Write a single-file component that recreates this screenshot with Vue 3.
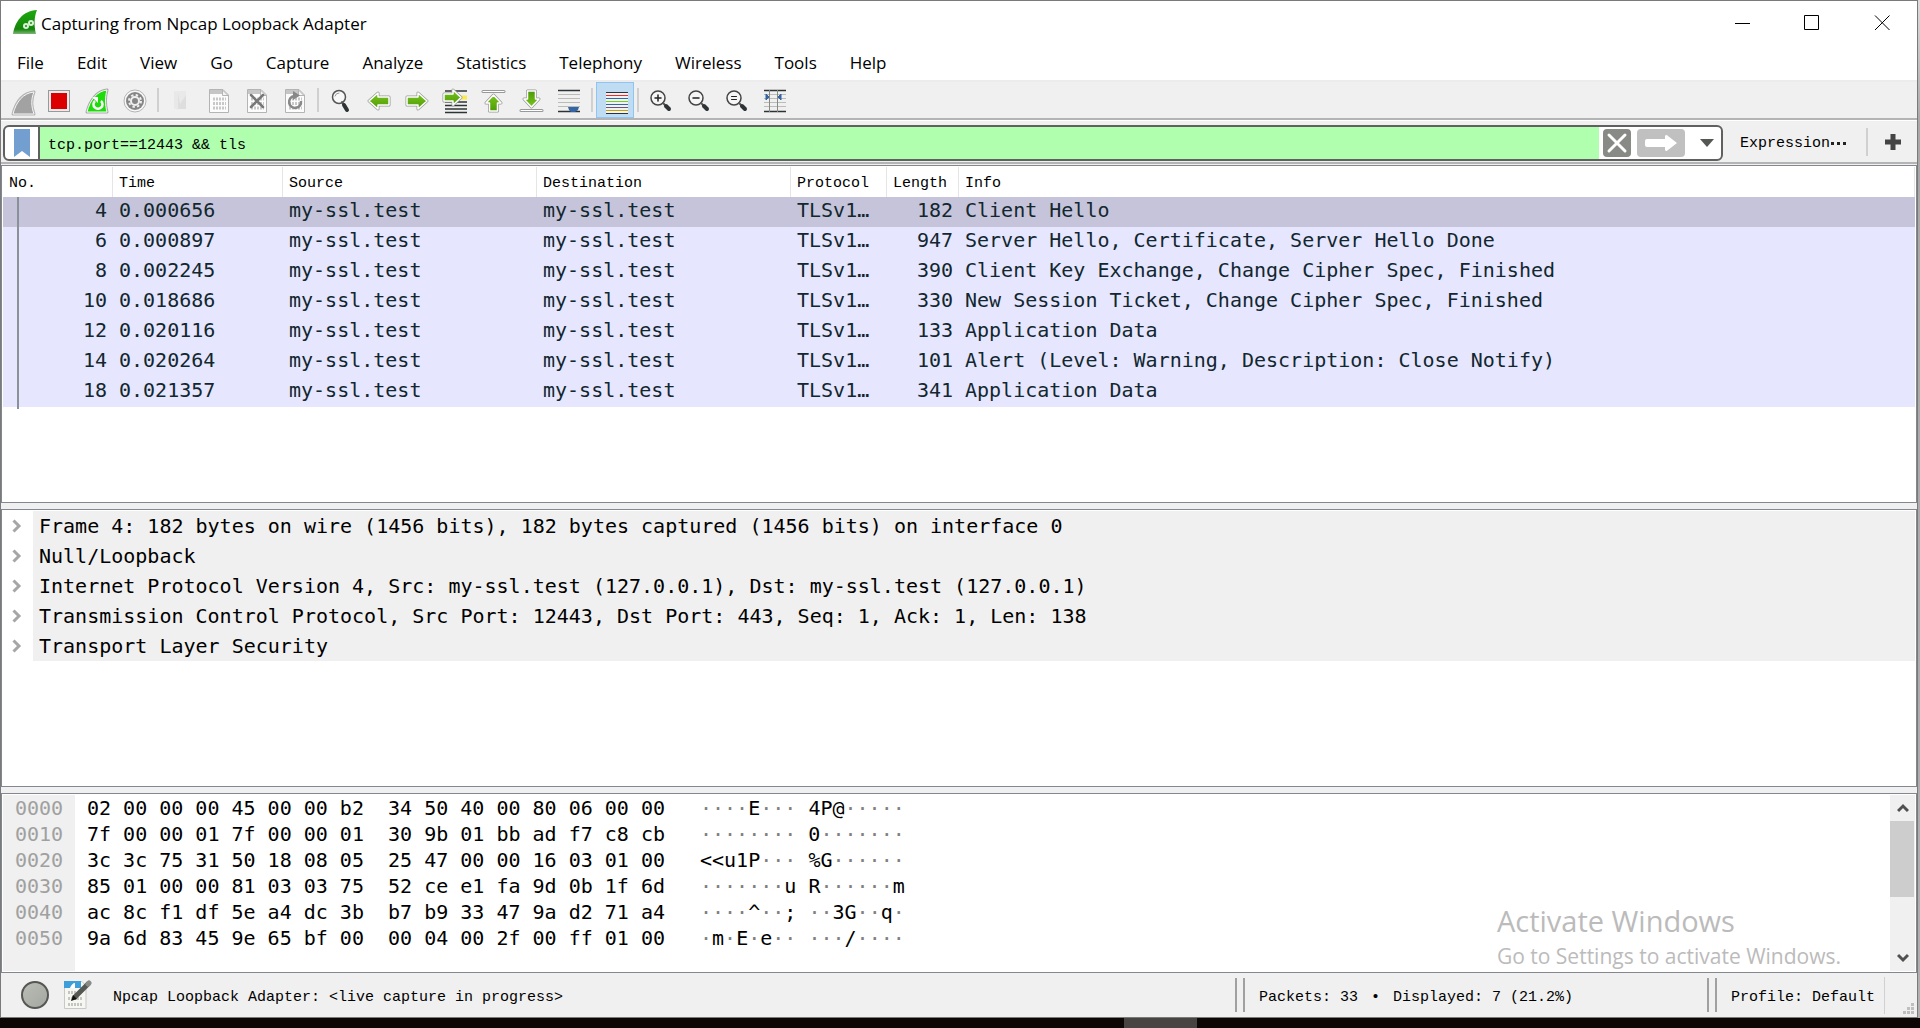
<script setup>
import { ref } from 'vue'

const menus = ['File', 'Edit', 'View', 'Go', 'Capture', 'Analyze', 'Statistics', 'Telephony', 'Wireless', 'Tools', 'Help']

const filter = ref('tcp.port==12443 && tls')

const columns = [
  { key: 'no', label: 'No.' },
  { key: 'time', label: 'Time' },
  { key: 'source', label: 'Source' },
  { key: 'destination', label: 'Destination' },
  { key: 'protocol', label: 'Protocol' },
  { key: 'length', label: 'Length' },
  { key: 'info', label: 'Info' },
]

const host = 'my-ssl.test'
const packets = [
  [4, '0.000656', 182, 'Client Hello'],
  [6, '0.000897', 947, 'Server Hello, Certificate, Server Hello Done'],
  [8, '0.002245', 390, 'Client Key Exchange, Change Cipher Spec, Finished'],
  [10, '0.018686', 330, 'New Session Ticket, Change Cipher Spec, Finished'],
  [12, '0.020116', 133, 'Application Data'],
  [14, '0.020264', 101, 'Alert (Level: Warning, Description: Close Notify)'],
  [18, '0.021357', 341, 'Application Data'],
].map(([no, time, length, info]) => ({ no, time, source: host, destination: host, protocol: 'TLSv1…', length, info }))

const selected = ref(4)

const layers = [
  'Frame 4: 182 bytes on wire (1456 bits), 182 bytes captured (1456 bits) on interface 0',
  'Null/Loopback',
  'Internet Protocol Version 4, Src: my-ssl.test (127.0.0.1), Dst: my-ssl.test (127.0.0.1)',
  'Transmission Control Protocol, Src Port: 12443, Dst Port: 443, Seq: 1, Ack: 1, Len: 138',
  'Transport Layer Security',
]

const dump = [
  ['0000', '02 00 00 00 45 00 00 b2  34 50 40 00 80 06 00 00', '····E··· 4P@·····'],
  ['0010', '7f 00 00 01 7f 00 00 01  30 9b 01 bb ad f7 c8 cb', '········ 0·······'],
  ['0020', '3c 3c 75 31 50 18 08 05  25 47 00 00 16 03 01 00', '<<u1P··· %G······'],
  ['0030', '85 01 00 00 81 03 03 75  52 ce e1 fa 9d 0b 1f 6d', '·······u R······m'],
  ['0040', 'ac 8c f1 df 5e a4 dc 3b  b7 b9 33 47 9a d2 71 a4', '····^··; ··3G··q·'],
  ['0050', '9a 6d 83 45 9e 65 bf 00  00 04 00 2f 00 ff 01 00', '·m·E·e·· ···/····'],
].map(([offset, hex, ascii]) => ({ offset, hex, runs: ascii.match(/·+|[^·]+/g) }))

const fin = 'M11 32C14 20 21 11 32 10C29 17 29 24 32 32Z'
const finSmall = 'M9 30C12 18 19 9 29 8C27 15 27 23 29 30Z'
const page = 'M9.500 7.500H23L28.500 13V30.500H9.500Z'
const left = 'M9 19L18 11V15H29V23H18V27Z'
const right = 'M29 19L20 11V15H9V23H20V27Z'

const tools = [
  { id: 'start', label: 'Start capturing packets' },
  { id: 'stop', label: 'Stop capturing packets' },
  { id: 'restart', label: 'Restart current capture' },
  { id: 'options', label: 'Capture options' },
  null,
  { id: 'open', label: 'Open a capture file' },
  { id: 'save', label: 'Save this capture file' },
  { id: 'close', label: 'Close this capture file' },
  { id: 'reload', label: 'Reload this file' },
  null,
  { id: 'find', label: 'Find a packet' },
  { id: 'prev', label: 'Go back' },
  { id: 'next', label: 'Go forward' },
  { id: 'goto', label: 'Go to specified packet' },
  { id: 'first', label: 'Go to first packet' },
  { id: 'last', label: 'Go to last packet' },
  { id: 'autoscroll', label: 'Auto scroll in live capture' },
  null,
  { id: 'colorize', label: 'Colorize packet list', active: true },
  null,
  { id: 'zoomin', label: 'Enlarge text' },
  { id: 'zoomout', label: 'Shrink text' },
  { id: 'zoomreset', label: 'Reset text size' },
  { id: 'resize', label: 'Resize columns' },
]
const stripes = ['#2e3436', '#ef2929', '#3465a4', '#73d216', '#3465a4', '#75507b', '#c4a000', '#2e3436']
</script>

<template>
  <div class="desktop">
    <main class="window">
      <header class="titlebar">
        <svg class="app-icon" width="26" height="26" viewBox="0 0 26 26">
          <defs>
            <linearGradient id="finFill" x1="0" y1="0" x2="0" y2="1">
              <stop offset="0" stop-color="#1ea80f" />
              <stop offset="0.8" stop-color="#14860b" />
              <stop offset="1" stop-color="#7fb57a" />
            </linearGradient>
          </defs>
          <path d="M2 25C4 13 11 2 26 1C23 8 23 17 25 25Z" fill="url(#finFill)" />
          <g fill="none" stroke="#d9f0d6" stroke-width="2">
            <circle cx="15" cy="17" r="2" /><circle cx="20" cy="14" r="2" />
          </g>
        </svg>
        <h1>Capturing from Npcap Loopback Adapter</h1>
        <div class="controls">
          <button aria-label="Minimize"><svg width="16" height="16"><path d="M1 8.500H16" /></svg></button>
          <button aria-label="Maximize"><svg width="16" height="16"><path d="M.5 .5H14.500V14.500H.5Z" /></svg></button>
          <button aria-label="Close"><svg width="16" height="16"><path d="M1 .5L15.500 15M15.500 .5L1 15" /></svg></button>
        </div>
      </header>

      <nav class="menubar">
        <button v-for="m in menus" :key="m">{{ m }}</button>
      </nav>

      <div class="toolbar" role="toolbar">
        <template v-for="(t, i) in tools" :key="i">
          <span v-if="!t" class="tool-sep"></span>
          <button v-else :aria-label="t.label" :class="{ active: t.active }">
            <svg width="38" height="36" viewBox="0 0 38 36">
              <defs v-if="t.id === 'start'">
                <linearGradient id="arrowFill" x1="0" y1="0" x2="0" y2="1">
                  <stop offset="0" stop-color="#7ac51f" /><stop offset="1" stop-color="#4e9a06" />
                </linearGradient>
              </defs>
              <g v-if="t.id === 'start'" stroke-linejoin="round">
                <path :d="fin" fill="#fff" stroke="#b4b4b4" stroke-width="3" />
                <path :d="fin" fill="#a2a2a2" stroke="#f6f6f6" stroke-width="1" />
              </g>
              <g v-else-if="t.id === 'stop'">
                <rect x="8.500" y="8.500" width="21" height="21" fill="#e8ecec" stroke="#999" />
                <rect x="11" y="11" width="16" height="16" fill="#d00" />
              </g>
              <g v-else-if="t.id === 'restart'" stroke-linejoin="round">
                <path :d="finSmall" fill="#fff" stroke="#aaa" stroke-width="3" />
                <path :d="finSmall" fill="#1edc0c" stroke="#f4fff2" stroke-width="1" />
                <path d="M17 19A4.500 4.500 0 1 0 23 19" fill="none" stroke="#fff" stroke-width="2.500" />
                <path d="M14 15H20V21Z" fill="#fff" />
              </g>
              <g v-else-if="t.id === 'options'" fill="none">
                <circle cx="19" cy="19" r="11" fill="#f8f8f8" stroke="#b4b4b4" />
                <circle cx="19" cy="19" r="9" fill="#868686" />
                <circle cx="19" cy="19" r="4" fill="#868686" stroke="#f0f0f0" stroke-width="2" />
                <circle cx="19" cy="19" r="6" stroke="#f0f0f0" stroke-width="2" stroke-dasharray="2.400 2.310" />
              </g>
              <g v-else-if="t.id === 'open'">
                <path d="M12 9L16 11V28L12 26Z" fill="#e8e8e8" />
                <path d="M16 11H24V27H16Z" fill="#dedede" /><path d="M12 9H24V13L18 22L16 11Z" fill="#e9e9e9" />
              </g>
              <g v-else-if="['save', 'close', 'reload'].includes(t.id)">
                <path :d="page" fill="#fcfcfc" stroke="#b4b4b4" />
                <path d="M10 8H23V12H10Z" fill="#c6c6c6" /><path d="M22.500 8V13.500H28Z" fill="#f4f4f4" stroke="#b4b4b4" />
                <path d="M13 17H26M13 21.500H26M13 26H26" stroke="#c8c8c8" stroke-width="3" stroke-dasharray="2 1" />
                <path v-if="t.id === 'close'" d="M13 13L25 25M25 13L13 25" stroke="#777" stroke-width="2.500" stroke-linecap="round" />
                <g v-if="t.id === 'reload'">
                  <path d="M18 14A6 6 0 1 0 25 19" fill="none" stroke="#888" stroke-width="2.500" />
                  <path d="M17 9L24 13.500L17 18Z" fill="#888" />
                </g>
              </g>
              <g v-else-if="t.id === 'find'" fill="none" stroke-linecap="round">
                <circle cx="17" cy="15" r="6.500" fill="#f8f8f8" stroke="#555" stroke-width="1.500" />
                <path d="M13 14A4 4 0 0 1 17 11" stroke="#999" />
                <path d="M20 20L22 23" stroke="#555" stroke-width="2" /><path d="M22 23L25 28" stroke="#2e3436" stroke-width="4" />
              </g>
              <g v-else-if="t.id === 'prev' || t.id === 'next'" stroke-linejoin="round">
                <path :d="t.id === 'prev' ? left : right" fill="#fff" stroke="#999" stroke-width="3" />
                <path :d="t.id === 'prev' ? left : right" fill="url(#arrowFill)" stroke="#fff" stroke-width="1.500" />
              </g>
              <g v-else-if="t.id === 'goto'" stroke-linejoin="round">
                <path d="M9 9H31M9 20H31M9 23.500H31M9 27H31M9 30.500H31" stroke="#2e3436" stroke-width="1.500" />
                <path d="M24 15.500H31" stroke="#fce94f" stroke-width="4" />
                <path d="M25 15.500L17 8V12H8V19H17V23Z" fill="#fff" stroke="#999" stroke-width="3" />
                <path d="M25 15.500L17 8V12H8V19H17V23Z" fill="url(#arrowFill)" stroke="#fff" stroke-width="1.500" />
              </g>
              <g v-else-if="t.id === 'first' || t.id === 'last'" stroke-linejoin="round" stroke-linecap="round"
                :transform="t.id === 'last' ? 'matrix(1 0 0 -1 0 38)' : undefined">
                <path d="M9 9.500H30" stroke="#999" stroke-width="3" /><path d="M9 9.500H30" stroke="#fff" />
                <path d="M19.500 13L27 21H23.500V29H15.500V21H12Z" fill="#fff" stroke="#999" stroke-width="3" />
                <path d="M19.500 13L27 21H23.500V29H15.500V21H12Z" fill="url(#arrowFill)" stroke="#fff" stroke-width="1.500" />
              </g>
              <g v-else-if="t.id === 'autoscroll'">
                <path d="M8 12.500H30M8 16.500H30M8 20.500H30M8 24.500H30" stroke="#babdb6" />
                <path d="M8 8.500H30M8 29.500H30" stroke="#2e3436" stroke-width="1.500" />
                <path d="M18 25H29L28 28L25 30H21L19 28Z" fill="#3465a4" />
              </g>
              <g v-else-if="t.id === 'colorize'">
                <rect x="10" y="10" width="22" height="22" fill="#eef2f2" />
                <path v-for="(c, n) in stripes" :key="n" :d="`M10 ${10.5 + n * 3}H32`" :stroke="c" />
              </g>
              <g v-else-if="t.id.startsWith('zoom')" fill="none" stroke-linecap="round">
                <circle cx="16" cy="16" r="7" fill="#f6f6f6" stroke="#444" stroke-width="1.500" />
                <path v-if="t.id === 'zoomin'" d="M13 16H19M16 13V19" stroke="#222" stroke-width="1.500" />
                <path v-if="t.id === 'zoomout'" d="M13 16H19" stroke="#222" stroke-width="1.500" />
                <path v-if="t.id === 'zoomreset'" d="M13.500 14.500H18.500M13.500 17.500H18.500" stroke="#222" />
                <path d="M21 21L23 23" stroke="#555" stroke-width="2" /><path d="M24 24L27 27" stroke="#2e3436" stroke-width="4" />
              </g>
              <g v-else>
                <path d="M8 12.500H30M8 16.500H30M8 20.500H30M8 24.500H30" stroke="#babdb6" />
                <path d="M8 8.500H30M8 29.500H30" stroke="#2e3436" stroke-width="1.500" />
                <path d="M13.500 8V30M21.500 8V30" stroke="#888a85" />
                <path d="M10 12L13 15L10 18ZM25 12L22 15L25 18Z" fill="#3465a4" stroke="#3465a4" />
              </g>
            </svg>
          </button>
        </template>
      </div>

      <form class="filterbar" @submit.prevent>
        <div class="filter-box">
          <button type="button" class="bookmark" aria-label="Manage saved bookmarks">
            <svg width="16" height="28"><path d="M0 0H16V28L8 22L0 28Z" fill="#729fcf" /></svg>
          </button>
          <input v-model="filter" type="text" aria-label="Display filter" spellcheck="false" />
          <button type="button" class="clear" aria-label="Clear filter">
            <svg width="28" height="28"><path d="M6 6L22 22M22 6L6 22" stroke="#fff" stroke-width="3" stroke-linecap="round" /></svg>
          </button>
          <button type="submit" class="apply" aria-label="Apply filter">
            <svg width="48" height="28"><path d="M10 10H28V7Q29 5 31 7L40 14L31 21Q29 23 28 21V18H10Q8 18 8 16V12Q8 10 10 10Z" fill="#fff" /></svg>
          </button>
          <button type="button" class="history" aria-label="Recent filters">
            <svg width="14" height="8"><path d="M0 0H14L7 8Z" fill="#555753" /></svg>
          </button>
        </div>
        <button type="button" class="expression">Expression<svg width="18" height="4"><path d="M1 0H4V3H1ZM7 0H10V3H7ZM13 0H16V3H13Z" fill="#222" /></svg></button>
        <span class="filter-sep"></span>
        <button type="button" class="add" aria-label="Add a display filter button">
          <svg width="16" height="16"><path d="M8 0V16M0 8H16" stroke="#444" stroke-width="5" /></svg>
        </button>
      </form>

      <section class="pane list">
        <table>
          <colgroup><col v-for="c in columns" :key="c.key" :class="'col-' + c.key" /></colgroup>
          <thead>
            <tr><th v-for="c in columns" :key="c.key" scope="col">{{ c.label }}</th></tr>
          </thead>
          <tbody>
            <tr v-for="p in packets" :key="p.no" :class="{ selected: p.no === selected }" @click="selected = p.no">
              <td v-for="c in columns" :key="c.key" :class="c.key">{{ p[c.key] }}</td>
            </tr>
          </tbody>
        </table>
      </section>

      <section class="pane details">
        <ul>
          <li v-for="l in layers" :key="l">
            <button class="expander" :aria-label="'Expand ' + l">
              <svg width="10" height="14"><path d="M1.500 1.500L7 7L1.500 12.500" fill="none" stroke="#a6a6a6" stroke-width="3" /></svg>
            </button>
            <span class="layer">{{ l }}</span>
          </li>
        </ul>
      </section>

      <section class="pane bytes">
        <div class="offsets"><div v-for="r in dump" :key="r.offset">{{ r.offset }}</div></div>
        <div class="hex"><div v-for="r in dump" :key="r.offset">{{ r.hex }}</div></div>
        <div class="ascii">
          <div v-for="r in dump" :key="r.offset"><span v-for="(s, i) in r.runs" :key="i" :class="{ dot: s[0] === '·' }">{{ s }}</span></div>
        </div>
        <div class="scrollbar">
          <button aria-label="Scroll up"><svg width="12" height="10"><path d="M1 8L6 3L11 8" /></svg></button>
          <div class="track"><div class="thumb"></div></div>
          <button aria-label="Scroll down"><svg width="12" height="10"><path d="M1 2L6 7L11 2" /></svg></button>
        </div>
        <div class="watermark">
          <p class="big">Activate Windows</p>
          <p class="small">Go to Settings to activate Windows.</p>
        </div>
      </section>

      <footer class="statusbar">
        <button class="expert" aria-label="Expert information"></button>
        <button class="comment" aria-label="Capture file comment">
          <svg width="28" height="30" viewBox="0 0 28 30">
            <path d="M.5 1.500H18L22 6V28.500H.5Z" fill="#f6f6f2" stroke="#c8c8c4" />
            <path d="M0 1H17V8H0Z" fill="#3d9fd9" /><path d="M6 8C7 5 9 3 11 3V8H6Z" fill="#fff" />
            <path d="M4 12.500H13M4 18.500H19M4 24.500H19" stroke="#c4c4c0" stroke-width="3" stroke-dasharray="2 1" />
            <path d="M10 18L25 3" stroke="#555753" stroke-width="5" /><path d="M24 4L25 3" stroke="#888a85" stroke-width="5" stroke-linecap="round" />
            <path d="M7 21L9 15L13 19Z" fill="#111" />
          </svg>
        </button>
        <span class="message">Npcap Loopback Adapter: &lt;live capture in progress&gt;</span>
        <span class="grip"></span>
        <span class="counts">Packets: 33 <span class="bullet">•</span> Displayed: 7 (21.2%)</span>
        <span class="grip"></span>
        <button class="profile">Profile: Default</button>
        <span class="corner">
          <svg width="12" height="12"><path d="M8 0H11V3H8ZM4 4H7V7H4ZM8 4H11V7H8ZM0 8H3V11H0ZM4 8H7V11H4ZM8 8H11V11H8Z" fill="#bfbfbf" /></svg>
        </span>
      </footer>
    </main>
    <div class="taskbar"><span class="task"></span></div>
  </div>
</template>

<style>
body {
  margin: 0;
}
</style>

<style scoped>
.desktop {
  display: flex;
  flex-direction: column;
  min-height: 100vh;
  box-sizing: border-box;
  background: linear-gradient(#dcdcdc, #a8a8a8 12%, #b0b0b0);
  font-family: "Liberation Mono", "Courier New", monospace;
  font-size: 15px;
  color: #000;
}
.window {
  flex: 1;
  display: flex;
  flex-direction: column;
  margin-right: 2px;
  border: 1px solid #7a7a7a;
  background: #f0f0f0;
}
button {
  display: flex;
  align-items: center;
  justify-content: center;
  padding: 0;
  border: 0;
  background: none;
  font: inherit;
  color: inherit;
}
svg {
  display: block;
  flex: none;
}

.titlebar {
  display: flex;
  align-items: center;
  height: 45px;
  padding-left: 10px;
  background: #fff;
}
.app-icon {
  margin-bottom: 4px;
}
.titlebar h1 {
  flex: 1;
  margin: 0 0 0 4px;
  font: 400 17px "Open Sans", sans-serif;
}
.controls {
  display: flex;
  align-self: stretch;
}
.controls button {
  width: 70px;
  padding-bottom: 2px;
}
.controls path {
  fill: none;
  stroke: #000;
}
.menubar {
  display: flex;
  gap: 1px;
  height: 34px;
  background: #fff;
  border-bottom: 2px solid #ececec;
  font: 17px "Open Sans", sans-serif;
}
.menubar button {
  padding: 0 16px 2px;
}

.toolbar {
  display: flex;
  height: 36px;
  padding-left: 1px;
  border-bottom: 2px solid #b4b4b4;
}
.toolbar button {
  width: 38px;
}
.toolbar .active {
  border: 1px solid #8ec5f2;
  background: #c0dcf3;
}
.tool-sep {
  box-sizing: border-box;
  width: 5px;
  margin: 6px 0 6px 3px;
  border-left: 2px solid #d0d0d0;
}

.filterbar {
  display: flex;
  align-items: center;
  height: 41px;
  padding: 0 16px 0 2px;
  border-top: 1px solid #fff;
  border-bottom: 2px solid #b4b4b4;
}
.filter-box {
  flex: 1;
  display: flex;
  align-items: center;
  height: 32px;
  margin-top: 3px;
  border: 2px solid #606060;
  border-radius: 6px;
  background: #fff;
  overflow: hidden;
}
.bookmark {
  width: 35px;
  align-self: stretch;
  border-right: 2px solid #606060;
}
.filter-box input {
  flex: 1;
  align-self: stretch;
  min-width: 0;
  padding: 4px 8px 0;
  border: 0;
  outline: 0;
  background: #afffaf;
  font: inherit;
}
.clear {
  margin-left: 4px;
  border-radius: 4px;
  background: #888a85;
}
.apply {
  margin-left: 6px;
  border-radius: 4px;
  background: #c0c0c0;
}
.history {
  width: 36px;
  padding-left: 8px;
}
.expression {
  margin-left: 17px;
  padding-top: 4px;
}
.filter-sep {
  width: 2px;
  height: 28px;
  margin: 0 17px 0 18px;
  background: #d0d0d0;
}

.pane {
  position: relative;
  box-sizing: border-box;
  border: 1px solid #828790;
  padding: 1px;
  background: #fff;
}
.list {
  flex: 337 1 0;
  margin-top: 1px;
}
.details {
  flex: 276 1 0;
  margin-top: 6px;
}
.bytes {
  flex: 177 1 0;
  margin-top: 6px;
  display: flex;
}

table {
  width: 100%;
  table-layout: fixed;
  border-collapse: separate;
  border-spacing: 0;
}
.col-no { width: 110px; }
.col-time { width: 170px; }
.col-source { width: 254px; }
.col-destination { width: 254px; }
.col-protocol { width: 96px; }
.col-length { width: 72px; }
th {
  box-sizing: border-box;
  height: 30px;
  padding: 3px 6px 0;
  border-right: 1px solid #e5e5e5;
  font-weight: 400;
  text-align: left;
}
td {
  box-sizing: border-box;
  height: 30px;
  padding: 0 6px 4px;
  background: #e6e6ff;
  font: 20px/26px "DejaVu Sans Mono", monospace;
  color: #12272e;
  white-space: nowrap;
  overflow: hidden;
}
.selected td {
  background: #c6c4da;
}
td.no,
td.length {
  text-align: right;
}
tbody {
  position: relative;
}
tbody::after {
  content: "";
  position: absolute;
  left: 14px;
  top: 0;
  bottom: -2px;
  width: 2px;
  background: #8a9298;
}

ul {
  margin: 0;
  padding: 0;
  list-style: none;
}
li {
  display: flex;
  height: 30px;
  font: 20px/30px "DejaVu Sans Mono", monospace;
}
.expander {
  width: 30px;
  padding-right: 3px;
}
.layer {
  flex: 1;
  padding-left: 6px;
  background: #f0f0f0;
  white-space: nowrap;
}

.bytes {
  font: 20px/26px "DejaVu Sans Mono", monospace;
  white-space: pre;
}
.offsets {
  box-sizing: border-box;
  width: 72px;
  padding-left: 12px;
  background: #f0f0f0;
  color: #a0a0a0;
}
.hex {
  box-sizing: border-box;
  width: 625px;
  padding-left: 12px;
}
.ascii {
  flex: 1;
}
.dot {
  color: #808080;
}
.scrollbar {
  display: flex;
  flex-direction: column;
  width: 25px;
  background: #f0f0f0;
}
.scrollbar button {
  height: 26px;
}
.scrollbar path {
  fill: none;
  stroke: #505050;
  stroke-width: 3;
}
.track {
  flex: 1;
}
.thumb {
  height: 76px;
  margin-right: 1px;
  background: #cdcdcd;
}
.watermark {
  position: absolute;
  right: 75px;
  bottom: 0;
  color: #bbb;
  font-family: "Open Sans", sans-serif;
}
.watermark p {
  margin: 0;
}
.big {
  font-size: 29px;
  line-height: 38px;
}
.small {
  font-size: 21px;
  line-height: 32px;
}

.statusbar {
  display: flex;
  align-items: center;
  height: 44px;
  padding-left: 20px;
}
.expert {
  width: 28px;
  height: 28px;
  border: 2px solid #555753;
  border-radius: 50%;
  background: linear-gradient(135deg, #babdb6, #a3a8a0);
}
.comment {
  margin-left: 15px;
}
.message {
  flex: 1;
  margin-left: 21px;
  padding-top: 5px;
}
.grip {
  width: 6px;
  height: 34px;
  border: solid #a0a0a0;
  border-width: 0 2px;
}
.counts {
  width: 448px;
  padding: 5px 0 0 14px;
}
.bullet {
  margin: 0 4px;
}
.profile {
  height: 37px;
  padding: 5px 9px 0 14px;
  border-right: 1px solid #d0d0d0;
}
.corner {
  display: flex;
  align-self: flex-end;
  padding: 0 2px 2px 18px;
}

.taskbar {
  height: 10px;
  display: flex;
  background: #0c0704;
}
.task {
  width: 73px;
  margin-left: 1124px;
  background: #484441;
}
</style>
